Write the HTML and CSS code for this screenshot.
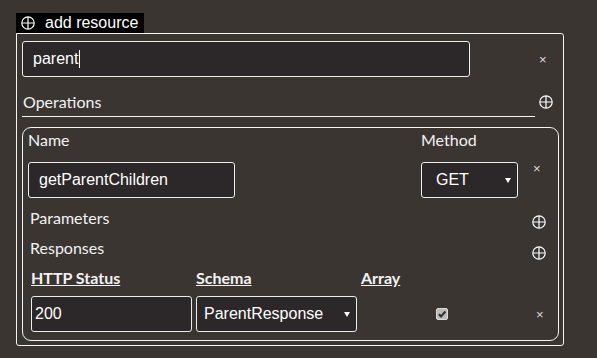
FILE: index.html
```html
<!DOCTYPE html>
<html lang="en">
<head>
<meta charset="utf-8">
<title>Resource editor</title>
<link rel="stylesheet" href="styles.css">
</head>
<body>
<div class="page">
  <button class="add-btn" type="button">
    <svg class="plus" viewBox="0 0 14 14" width="14" height="14"><circle cx="7" cy="7" r="6.2"/><path d="M1 7H13M7 1V13"/></svg>
    <span>add resource</span>
  </button>
  <div class="resource">
    <div class="resource-row">
      <div class="field field-resource">parent<span class="caret"></span></div>
      <span class="remove">×</span>
    </div>
    <div class="section-head">
      <div class="section-title">Operations</div>
      <svg class="plus" viewBox="0 0 14 14" width="14" height="14"><circle cx="7" cy="7" r="6.2"/><path d="M1 7H13M7 1V13"/></svg>
    </div>
    <div class="operation">
      <div class="op-grid">
        <span class="lbl">Name</span>
        <span class="lbl">Method</span>
        <span></span>
        <div class="field field-name">getParentChildren</div>
        <div class="field select select-method"><span>GET</span><svg class="caret-down" viewBox="0 0 6 5" width="6" height="5"><path d="M0 0H6L3 5Z"/></svg></div>
        <span class="remove">×</span>
      </div>
      <div class="sub-head sub-params">
        <span>Parameters</span>
        <svg class="plus" viewBox="0 0 14 14" width="14" height="14"><circle cx="7" cy="7" r="6.2"/><path d="M1 7H13M7 1V13"/></svg>
      </div>
      <div class="sub-head sub-responses">
        <span>Responses</span>
        <svg class="plus" viewBox="0 0 14 14" width="14" height="14"><circle cx="7" cy="7" r="6.2"/><path d="M1 7H13M7 1V13"/></svg>
      </div>
      <div class="resp-grid">
        <span class="col-head">HTTP Status</span>
        <span class="col-head">Schema</span>
        <span class="col-head">Array</span>
        <span></span>
        <div class="field field-status">200</div>
        <div class="field select select-schema"><span>ParentResponse</span><svg class="caret-down" viewBox="0 0 6 5" width="6" height="5"><path d="M0 0H6L3 5Z"/></svg></div>
        <span class="check"><svg viewBox="0 0 10 10" width="10" height="10"><path d="M1.8 5.2L4 7.4L8.4 2.4"/></svg></span>
        <span class="remove">×</span>
      </div>
    </div>
  </div>
</div>
</body>
</html>
```
FILE: styles.css
```css
* {
  box-sizing: border-box;
}

html,
body {
  margin: 0;
}

body {
  width: 597px;
  height: 358px;
  overflow: hidden;
  background: #3b3532;
  color: #fff;
  font-family: "Liberation Sans", Arial, sans-serif;
  font-size: 16px;
}

.page {
  padding: 13px 0 0 16px;
}

.plus {
  display: block;
  flex: none;
  fill: none;
  stroke: #fff;
  stroke-width: 1.2;
}

.add-btn {
  display: flex;
  align-items: center;
  gap: 10px;
  width: 128px;
  height: 20px;
  margin: 0;
  padding: 0 0 0 5px;
  border: 0;
  border-radius: 0;
  background: #000;
  color: #fff;
  font: 16px/20px "Liberation Sans", Arial, sans-serif;
}

.resource {
  width: 548px;
  border: 1px solid #f4f4f4;
  border-radius: 0 3px 3px 3px;
  padding: 7px 0 4px 5px;
}

.resource-row {
  display: flex;
  align-items: center;
}

.field {
  display: flex;
  align-items: center;
  height: 36px;
  background: #2c2728;
  border: 1px solid #ececec;
  border-radius: 3px;
  color: #fff;
  font: 16px "Liberation Sans", Arial, sans-serif;
  white-space: nowrap;
}

.field-resource {
  width: 448px;
  padding-left: 10px;
}

.caret {
  width: 1px;
  height: 18px;
  margin-left: 1px;
  background: #fff;
}

.remove {
  display: block;
  color: #dcdcdc;
  font: 13px/1 "Liberation Sans", Arial, sans-serif;
}

.resource-row .remove {
  margin-left: 69px;
}

.section-head {
  display: flex;
  margin-top: 15px;
}

.section-title {
  width: 513px;
  padding: 0 0 4px 1px;
  border-bottom: 1px solid #f4f4f4;
  color: #f2f2f2;
  font: 16px/20px Lato, "Liberation Sans", sans-serif;
}

.section-head .plus {
  margin: 3px 0 0 4px;
}

.operation {
  width: 537px;
  margin-top: 10px;
  border: 1px solid #f4f4f4;
  border-radius: 9px;
  padding: 2px 0 8px 5px;
}

.op-grid {
  display: grid;
  grid-template-columns: 393px 97px auto;
  row-gap: 12px;
}

.lbl,
.sub-head {
  color: #f2f2f2;
  font: 16px/20px Lato, "Liberation Sans", sans-serif;
}

.field-name {
  width: 207px;
  padding-left: 10px;
}

.select {
  justify-content: space-between;
  padding-right: 6px;
}

.select-method {
  width: 97px;
  padding-left: 14px;
}

.caret-down {
  display: block;
  fill: #fff;
}

.op-grid .remove {
  align-self: start;
  padding-left: 15px;
}

.sub-head {
  display: flex;
  justify-content: space-between;
  height: 20px;
  padding-left: 2px;
  margin-top: 10px;
}

.sub-params .plus {
  margin: 7px 12px 0 0;
}

.sub-responses .plus {
  margin: 8px 12px 0 0;
}

.resp-grid {
  display: grid;
  grid-template-columns: 161px 161px 161px auto;
  column-gap: 4px;
  row-gap: 8px;
  margin-top: 10px;
  padding-left: 3px;
}

.col-head {
  color: #f2f2f2;
  font: 700 16px/20px Lato, "Liberation Sans", sans-serif;
  text-decoration: underline;
}

.field-status {
  padding-left: 3px;
}

.select-schema {
  padding-left: 7px;
}

.check {
  display: flex;
  align-items: center;
  justify-content: center;
  justify-self: center;
  align-self: center;
  width: 12px;
  height: 12px;
  background: #bdbdbd;
  border: 1px solid #dadada;
  border-radius: 2px;
}

.check svg {
  display: block;
  fill: none;
  stroke: #333;
  stroke-width: 2.2;
}

.resp-grid .remove {
  align-self: center;
  padding-left: 10px;
}
```
